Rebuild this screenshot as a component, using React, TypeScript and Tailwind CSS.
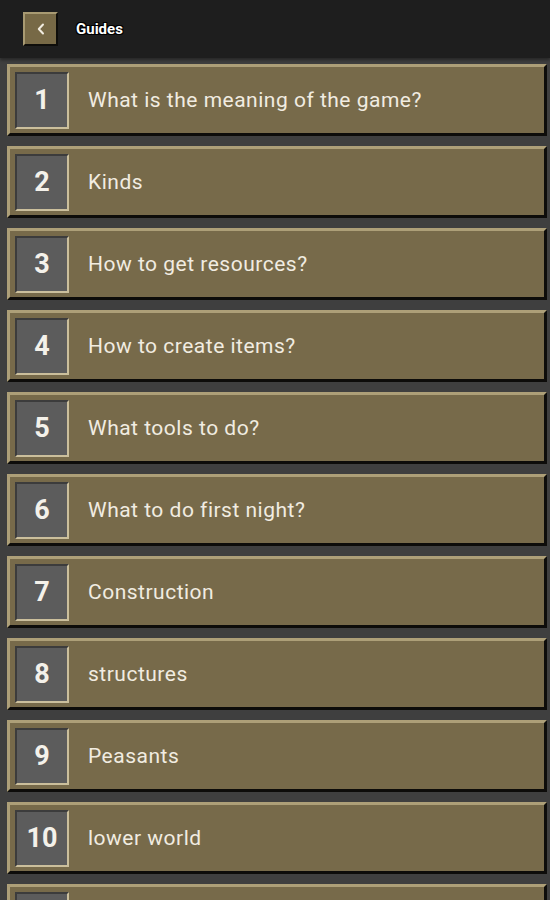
import React from "react";

const GUIDES = [
  "What is the meaning of the game?",
  "Kinds",
  "How to get resources?",
  "How to create items?",
  "What tools to do?",
  "What to do first night?",
  "Construction",
  "structures",
  "Peasants",
  "lower world",
  "Mobs",
];

function BackButton() {
  return (
    <button className="flex h-[34px] w-[35px] items-center justify-center border-t-2 border-l-2 border-[#a89a72] border-r-2 border-b-2 border-r-[#0e0d0a] border-b-[#0e0d0a] bg-[#776946]">
      <svg width="12" height="14" viewBox="0 0 12 14" fill="none">
        <path d="M8 2.5 L3.8 7 L8 11.5" stroke="#f1ece0" strokeWidth="2" strokeLinecap="round" strokeLinejoin="round" />
      </svg>
    </button>
  );
}

function GuideRow({ n, title }: { n: number; title: string }) {
  return (
    <div className="flex h-[72px] items-center border-t-[3px] border-l-[3px] border-[#ad9f78] border-r-[3px] border-b-[3px] border-r-[#0d0c0a] border-b-[#0d0c0a] bg-[#776a4a] pl-[5px]">
      <div className="flex h-[57px] w-[54px] shrink-0 items-center justify-center border-t-2 border-l-2 border-[#3c3c3c] border-r-2 border-b-2 border-r-[#cbbf9c] border-b-[#cbbf9c] bg-[#5c5c5c]">
        <span className="text-[27px] font-bold leading-none text-[#f4f1ea]">{n}</span>
      </div>
      <span className="ml-[19px] text-[21px] leading-none tracking-[0.5px] text-[#f1ece1]">{title}</span>
    </div>
  );
}

export default function App() {
  return (
    <div className="flex h-[900px] w-[550px] flex-col overflow-hidden bg-[#3f3f3f] font-['Roboto','Noto_Sans',sans-serif]">
      <header className="flex h-[58px] shrink-0 items-center gap-[18px] bg-[#1e1e1e] pl-[23px] shadow-[0_2px_3px_rgba(0,0,0,0.4)]">
        <BackButton />
        <span className="text-[15px] font-bold text-white [text-shadow:0_0_1px_#000,1px_1px_0_#000,-1px_-1px_0_#000,1px_-1px_0_#000,-1px_1px_0_#000]">
          Guides
        </span>
      </header>
      <div className="flex flex-col gap-[10px] pl-[7px] pr-[3px] pt-[6px]">
        {GUIDES.map((g, i) => (
          <GuideRow key={i} n={i + 1} title={g} />
        ))}
      </div>
    </div>
  );
}
